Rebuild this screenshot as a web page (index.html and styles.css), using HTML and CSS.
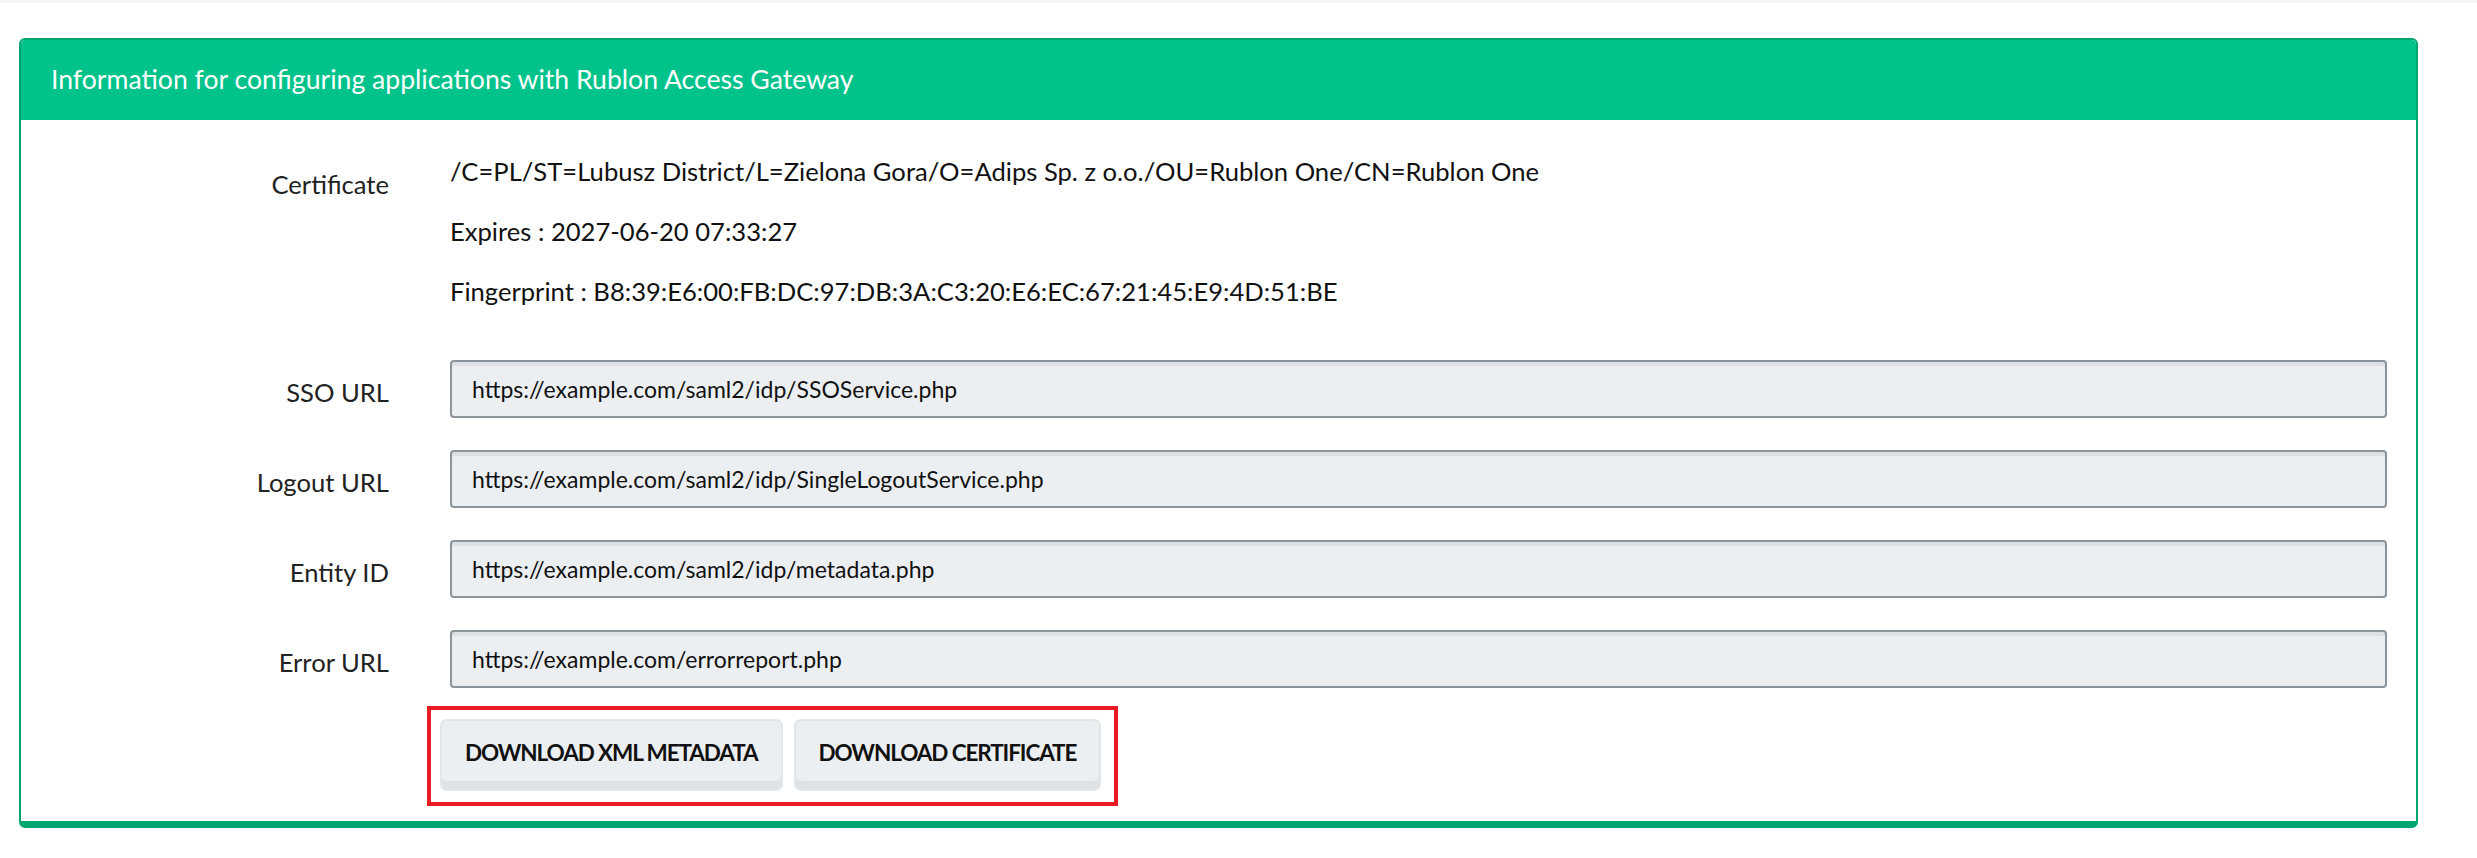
FILE: index.html
```html
<!DOCTYPE html>
<html lang="en">
<head>
    <meta charset="UTF-8">
    <title>Rublon Access Gateway</title>
    <link rel="stylesheet" href="styles.css">
</head>
<body>
    <div class="top-line"></div>
    <div class="card">
        <div class="card-header">Information for configuring applications with Rublon Access Gateway</div>
        <div class="card-body">
            <!-- Certificate -->
            <div class="row cert-row">
                <div class="label">Certificate</div>
                <div class="value">
                    <p>/C=PL/ST=Lubusz District/L=Zielona Gora/O=Adips Sp. z o.o./OU=Rublon One/CN=Rublon One</p>
                    <p>Expires : 2027-06-20 07:33:27</p>
                    <p>Fingerprint : B8:39:E6:00:FB:DC:97:DB:3A:C3:20:E6:EC:67:21:45:E9:4D:51:BE</p>
                </div>
            </div>

            <div class="row field-row">
                <label class="label" for="sso-url">SSO URL</label>
                <input class="field" type="text" id="sso-url" value="https://example.com/saml2/idp/SSOService.php" readonly>
            </div>
            <div class="row field-row">
                <label class="label" for="logout-url">Logout URL</label>
                <input class="field" type="text" id="logout-url" value="https://example.com/saml2/idp/SingleLogoutService.php" readonly>
            </div>
            <div class="row field-row">
                <label class="label" for="entity-id">Entity ID</label>
                <input class="field" type="text" id="entity-id" value="https://example.com/saml2/idp/metadata.php" readonly>
            </div>
            <div class="row field-row">
                <label class="label" for="error-url">Error URL</label>
                <input class="field" type="text" id="error-url" value="https://example.com/errorreport.php" readonly>
            </div>

            <!-- Downloads -->
            <div class="row">
                <div class="label"></div>
                <div class="downloads">
                    <button type="button" class="btn">Download XML metadata</button>
                    <button type="button" class="btn">Download certificate</button>
                </div>
            </div>
        </div>
    </div>
</body>
</html>
```

FILE: styles.css
```css
body {
    margin: 0;
    background: #fff;
    font-family: Lato, "Open Sans", sans-serif;
    color: #212529;
}
.top-line {
    height: 3px;
    background: #f4f5f6;
}
.card {
    width: 2399px;
    margin: 35px 0 0 19px;
    box-sizing: border-box;
    border: 2px solid #00a572;
    border-bottom-width: 7px;
    border-radius: 6px;
    overflow: hidden;
}
.card-header {
    height: 80px;
    padding: 0 30px 2px;
    box-sizing: border-box;
    display: flex;
    align-items: center;
    background: #00c38b;
    color: #fff;
    font-size: 26.6px;
}
.card-body {
    padding: 33px 29px 15px 0;
}
.row {
    display: flex;
}
.label {
    width: 368px;
    flex-shrink: 0;
    margin-right: 61px;
    text-align: right;
    font-size: 25.6px;
    color: #222;
}
.cert-row .label {
    padding-top: 13px;
    line-height: 36px;
}
.value p {
    margin: 0 0 24px;
    font-size: 25.6px;
    line-height: 36px;
    color: #111;
}
.cert-row {
    margin-bottom: 27px;
}
.field-row {
    align-items: center;
    margin-bottom: 32px;
}
.field-row .label {
    padding-top: 6px;
}
.field-row:nth-child(5) {
    margin-bottom: 18px;
}
.field {
    flex: 1;
    height: 58px;
    box-sizing: border-box;
    padding: 0 20px;
    border: 2px solid #8a949c;
    border-radius: 4px;
    background: #eceff2;
    box-shadow: inset 0 4px 0 #dde1e5;
    font-family: inherit;
    font-size: 23px;
    color: #111;
    outline: none;
}
.downloads {
    display: flex;
    gap: 11px;
    margin-left: -23px;
    padding: 9px 13px 11px 9px;
    border: 4px solid #ed1c24;
}
.btn {
    height: 72px;
    padding: 0 23px 6px;
    border: 2px solid #e2e6ea;
    border-radius: 7px;
    background: #eceff2;
    box-shadow: inset 0 -8px 0 #dde2e7;
    font-family: inherit;
    font-weight: bold;
    font-size: 22.5px;
    letter-spacing: -1.1px;
    text-transform: uppercase;
    color: #111;
    cursor: pointer;
}
```
